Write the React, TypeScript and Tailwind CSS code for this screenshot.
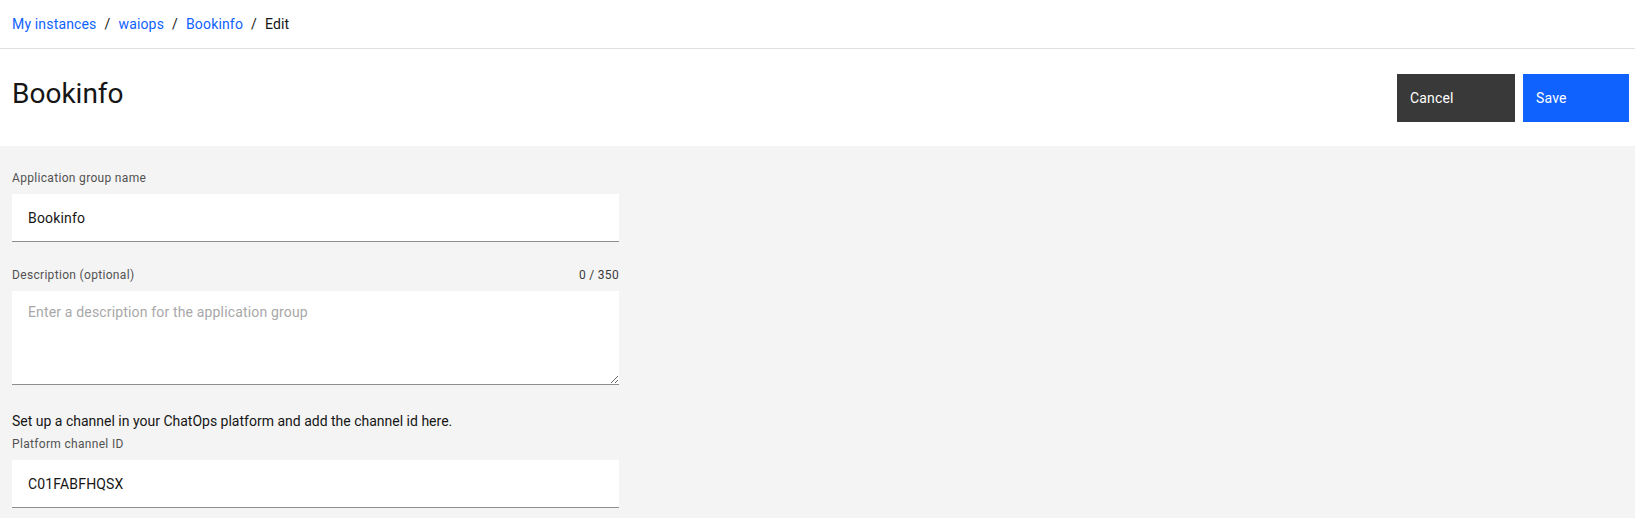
import { useState } from 'react';

const font = { fontFamily: 'Roboto, "Liberation Sans", sans-serif' };

function Label({ children, right }: { children: React.ReactNode; right?: string }) {
  return (
    <div className="flex justify-between items-center h-4 mb-2 text-xs leading-4 tracking-[0.32px] text-[#525252]">
      <span>{children}</span>
      {right && <span className="text-[#393939]">{right}</span>}
    </div>
  );
}

export default function App() {
  const [name, setName] = useState('Bookinfo');
  const [desc, setDesc] = useState('');
  const [channel, setChannel] = useState('C01FABFHQSX');

  return (
    <div className="min-h-screen w-full bg-[#f4f4f4] text-[#161616]" style={font}>
      {/* breadcrumb */}
      <div className="bg-white h-[49px] border-b border-[#e0e0e0] px-3 flex items-center text-sm tracking-[0.16px]">
        <a className="text-[#0f62fe]">My instances</a>
        <span className="mx-2">/</span>
        <a className="text-[#0f62fe]">waiops</a>
        <span className="mx-2">/</span>
        <a className="text-[#0f62fe]">Bookinfo</a>
        <span className="mx-2">/</span>
        <span>Edit</span>
      </div>

      {/* title bar */}
      <div className="bg-white flex justify-between items-start pl-3 pr-[6px] pt-[25px] pb-6">
        <h1 className="text-[28px] leading-9 font-normal mt-[2px]">Bookinfo</h1>
        <div className="flex gap-2">
          <button className="w-[118px] h-12 bg-[#393939] text-white text-sm tracking-[0.16px] text-left pl-[13px]">
            Cancel
          </button>
          <button className="w-[106px] h-12 bg-[#0f62fe] text-white text-sm tracking-[0.16px] text-left pl-[13px]">
            Save
          </button>
        </div>
      </div>

      {/* form */}
      <div className="px-3 pt-6 w-[631px]">
        <Label>Application group name</Label>
        <input
          value={name}
          onChange={(e) => setName(e.target.value)}
          className="w-full h-12 bg-white border-b border-[#8d8d8d] px-4 text-sm tracking-[0.16px] outline-none"
        />

        <div className="mt-[25px]">
          <Label right="0 / 350">Description (optional)</Label>
          <textarea
            value={desc}
            onChange={(e) => setDesc(e.target.value)}
            placeholder="Enter a description for the application group"
            className="block w-full h-[94px] bg-white border-b border-[#8d8d8d] px-4 py-[11px] text-sm leading-5 tracking-[0.16px] outline-none resize-y placeholder:text-[#a8a8a8]"
          />
        </div>

        <p className="mt-[26px] text-sm leading-5">
          Set up a channel in your ChatOps platform and add the channel id here.
        </p>
        <div className="mt-[5px]">
          <Label>Platform channel ID</Label>
          <input
            value={channel}
            onChange={(e) => setChannel(e.target.value)}
            className="w-full h-12 bg-white border-b border-[#8d8d8d] px-4 text-sm tracking-[0.16px] outline-none"
          />
        </div>
      </div>
    </div>
  );
}
